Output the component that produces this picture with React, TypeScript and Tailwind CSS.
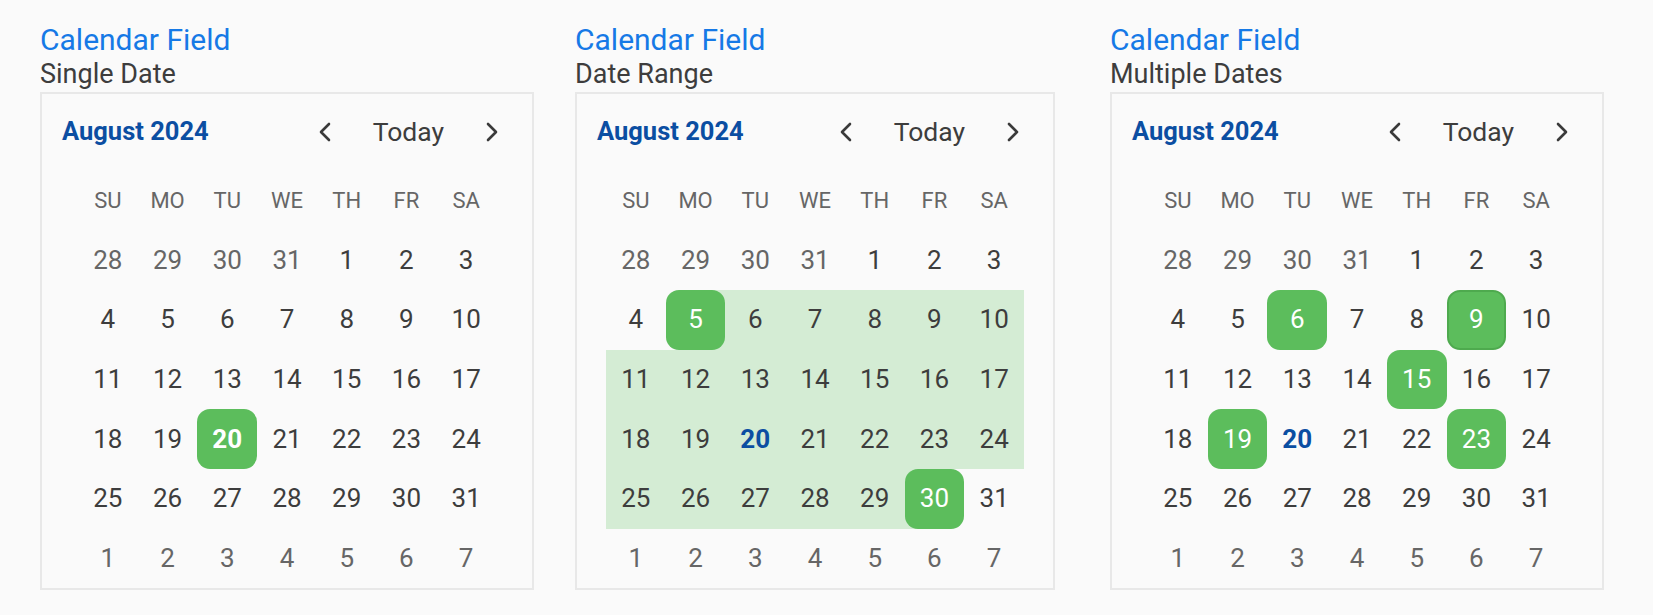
import React from 'react';

type Mode = 'single' | 'range' | 'multiple';

const weekDays = ['SU', 'MO', 'TU', 'WE', 'TH', 'FR', 'SA'];

// August 2024 view: starts on Sun Jul 28, six weeks
const buildDays = () => {
  const days: { day: number; current: boolean }[] = [];
  [28, 29, 30, 31].forEach((d) => days.push({ day: d, current: false }));
  for (let d = 1; d <= 31; d++) days.push({ day: d, current: true });
  for (let d = 1; d <= 7; d++) days.push({ day: d, current: false });
  return days;
};

const Chevron = ({ dir }: { dir: 'left' | 'right' }) => (
  <svg width="14" height="20" viewBox="0 0 14 20" fill="none">
    <path
      d={dir === 'left' ? 'M11 2 L3 10 L11 18' : 'M3 2 L11 10 L3 18'}
      stroke="#3a3a3a"
      strokeWidth="2.6"
      strokeLinecap="round"
      strokeLinejoin="round"
    />
  </svg>
);

const Calendar = ({ mode }: { mode: Mode }) => {
  const days = buildDays();
  const today = 20;
  const multi = [6, 9, 15, 19, 23];
  const narrow = mode === 'range';

  return (
    <div className={`border-2 border-[#e8e8e8] bg-[#fafafa] pt-[20px] ${narrow ? 'w-[480px]' : 'w-[494px]'}`}>
      {/* Header */}
      <div className="flex items-center justify-between h-[36px] px-[20px] mb-[21px]">
        <span className="text-[25.5px] font-bold text-[#0b4ea2] leading-none">August 2024</span>
        <div className="flex items-center">
          <button className="w-[40px] h-[36px] flex items-center justify-center">
            <Chevron dir="left" />
          </button>
          <button className="px-[28px] h-[36px] text-[26.5px] text-[#3d3d3d] leading-none">Today</button>
          <button className="w-[40px] h-[36px] flex items-center justify-center">
            <Chevron dir="right" />
          </button>
        </div>
      </div>

      {/* Grid */}
      <div className={`grid grid-cols-7 ${narrow ? 'mx-[29px]' : 'mx-[36px]'}`}>
        {weekDays.map((w) => (
          <div key={w} className="h-[59.6px] flex items-center justify-center text-[22px] text-[#666666]">
            {w}
          </div>
        ))}
        {days.map(({ day, current }, i) => {
          const isToday = current && day === today;
          let selected = false;
          let rangeBg = '';
          if (current && mode === 'single') selected = day === 20;
          if (current && mode === 'range') {
            selected = day === 5 || day === 30;
            if (day === 5) rangeBg = 'bg-[linear-gradient(to_right,transparent_50%,#d4ecd4_50%)]';
            else if (day === 30) rangeBg = 'bg-[linear-gradient(to_right,#d4ecd4_50%,transparent_50%)]';
            else if (day > 5 && day < 30) rangeBg = 'bg-[#d4ecd4]';
          }
          if (current && mode === 'multiple') selected = multi.includes(day);
          const focused = mode === 'multiple' && current && day === 9;

          return (
            <div key={i} className={`h-[59.6px] ${rangeBg}`}>
              <div
                className={`w-full h-full flex items-center justify-center rounded-[13px] text-[26px] ${
                  selected
                    ? `bg-[#5cbd5c] text-white ${focused ? 'border-2 border-[#4eaa4e]' : ''}`
                    : isToday
                    ? 'text-[#0b4ea2]'
                    : current
                    ? 'text-[#3d3d3d]'
                    : 'text-[#666666]'
                } ${isToday ? 'font-bold' : ''}`}
              >
                {day}
              </div>
            </div>
          );
        })}
      </div>
    </div>
  );
};

const Field = ({ subtitle, mode }: { subtitle: string; mode: Mode }) => (
  <div className="w-[494px]">
    <div className="text-[30px] leading-[39px] text-[#1679e6]">Calendar Field</div>
    <div className="text-[27px] leading-[31px] text-[#3d3d3d] mb-[2px]">{subtitle}</div>
    <Calendar mode={mode} />
  </div>
);

export default function App() {
  return (
    <div
      className="min-h-screen bg-[#fafafa] pl-[40px] pt-[20px] flex gap-[41px]"
      style={{ fontFamily: 'Roboto, "Noto Sans", sans-serif' }}
    >
      <Field subtitle="Single Date" mode="single" />
      <Field subtitle="Date Range" mode="range" />
      <Field subtitle="Multiple Dates" mode="multiple" />
    </div>
  );
}
